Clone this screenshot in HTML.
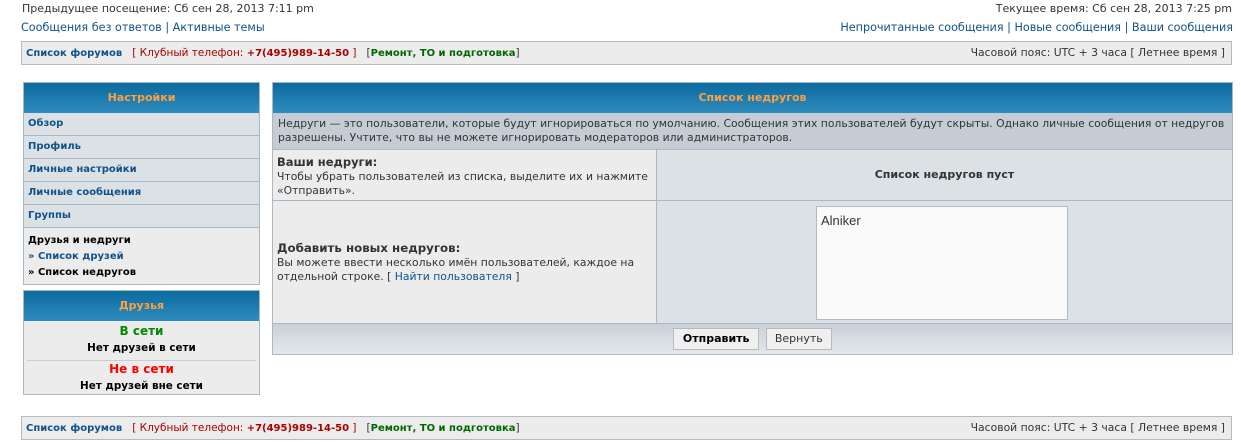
<!DOCTYPE html><html><head><meta charset="utf-8"><style>
*{margin:0;padding:0;box-sizing:border-box}
body{width:1241px;height:444px;background:#fff;font-family:"DejaVu Sans","Liberation Sans",sans-serif;font-size:10.4px;color:#333;position:relative;overflow:hidden}
.a{position:absolute;white-space:nowrap}
.blue{color:#105289}
.nav{position:absolute;left:21px;width:1211px;height:24px;background:#ececec;border:1px solid #b4bac0;font-size:10.5px;line-height:22px}
.nav b{font-weight:bold;font-size:10px}
.hdr{background:linear-gradient(#0a6a9e,#2f8cbe);color:#ff9f40;font-weight:bold;text-align:center;font-size:11px}
.box{position:absolute;border:1px solid #a9b8c2;background:#ececec}
.item{height:23px;border-bottom:1px solid #a9b8c2;background:#dce1e5;color:#105289;font-weight:bold;font-size:10px;line-height:22px;padding-left:4px}
</style></head><body>
<div class="a" style="left:22px;top:2px;font-size:11px">Предыдущее посещение: Сб сен 28, 2013 7:11 pm</div>
<div class="a" style="right:9px;top:2px;font-size:11px">Текущее время: Сб сен 28, 2013 7:25 pm</div>
<div class="a blue" style="left:21px;top:21px;font-size:11.2px">Сообщения без ответов | Активные темы</div>
<div class="a blue" style="right:8px;top:21px;font-size:11.2px">Непрочитанные сообщения | Новые сообщения | Ваши сообщения</div>

<div class="nav" style="top:41px"><span style="margin-left:4px;color:#105289;font-weight:bold;font-size:10px">Список форумов</span> &nbsp; <span style="color:#a00">[ Клубный телефон: <b>+7(495)989-14-50</b> ]</span> &nbsp; <span style="color:#333">[</span><b style="color:#060">Ремонт, ТО и подготовка</b><span>]</span><span style="position:absolute;right:6px;font-size:10.8px">Часовой пояс: UTC + 3 часа [ Летнее время ]</span></div>

<div class="box" style="left:23px;top:82px;width:237px;height:203px">
<div class="hdr" style="height:30px;line-height:29px">Настройки</div>
<div class="item">Обзор</div><div class="item">Профиль</div><div class="item">Личные настройки</div><div class="item">Личные сообщения</div><div class="item">Группы</div>
<div style="padding:5px 4px;font-weight:bold;font-size:10px;line-height:16px;color:#000">Друзья и недруги<br><span style="color:#105289">» Список друзей</span><br>» Список недругов</div>
</div>

<div class="box" style="left:23px;top:290px;width:237px;height:105px">
<div class="hdr" style="height:30px;line-height:29px;margin-top:0">Друзья</div>
<div style="text-align:center;font-weight:bold;line-height:17px;padding-top:2px">
<div style="color:#080;font-size:12px">В сети</div><div style="color:#000">Нет друзей в сети</div>
<div style="border-top:1px solid #ccc;margin:3px 3px 0;color:#f00;font-size:12px">Не в сети</div><div style="color:#000">Нет друзей вне сети</div></div>
</div>

<div class="box" style="left:272px;top:82px;width:961px;height:273px;background:#dce1e5">
<div class="hdr" style="height:30px;line-height:29px">Список недругов</div>
<div style="height:37px;background:#c5ccd3;border-bottom:1px solid #a9b8c2;padding:4px 5px;line-height:14px;font-size:10.8px">Недруги — это пользователи, которые будут игнорироваться по умолчанию. Сообщения этих пользователей будут скрыты. Однако личные сообщения от недругов разрешены. Учтите, что вы не можете игнорировать модераторов или администраторов.</div>
<div style="display:flex;height:51px;border-bottom:1px solid #a9b8c2">
<div style="width:384px;background:#ececec;border-right:1px solid #a9b8c2;padding:5px 4px;line-height:14px;font-size:10.8px"><b style="font-size:11.5px">Ваши недруги:</b><br>Чтобы убрать пользователей из списка, выделите их и нажмите «Отправить».</div>
<div style="flex:1;text-align:center;font-weight:bold;font-size:11px;line-height:50px">Список недругов пуст</div></div>
<div style="display:flex;height:123px;border-bottom:1px solid #a9b8c2">
<div style="width:384px;background:#ececec;border-right:1px solid #a9b8c2;padding:40px 4px 0;line-height:14px;font-size:10.8px"><b style="font-size:11.8px">Добавить новых недругов:</b><br>Вы можете ввести несколько имён пользователей, каждое на отдельной строке. [ <span class="blue">Найти пользователя</span> ]</div>
<div style="flex:1;position:relative"><div style="position:absolute;left:159px;top:5px;width:252px;height:114px;background:#fafafa;border:1px solid #b4bac0;padding:6px 4px;font-family:'Liberation Sans',sans-serif;font-size:13px;color:#333">Alniker</div></div></div>
<div style="height:30px;background:linear-gradient(#c8d0d7,#e4e8ec);text-align:center;padding-top:4px">
<span style="display:inline-block;width:86px;height:22px;border:1px solid #b4bac0;background:#efefef;font-weight:bold;font-size:11px;line-height:20px;color:#000">Отправить</span>&nbsp;&nbsp;<span style="display:inline-block;width:66px;height:22px;border:1px solid #b4bac0;background:#efefef;font-size:11px;line-height:20px">Вернуть</span></div>
</div>

<div class="nav" style="top:416px"><span style="margin-left:4px;color:#105289;font-weight:bold;font-size:10px">Список форумов</span> &nbsp; <span style="color:#a00">[ Клубный телефон: <b>+7(495)989-14-50</b> ]</span> &nbsp; <span style="color:#333">[</span><b style="color:#060">Ремонт, ТО и подготовка</b><span>]</span><span style="position:absolute;right:6px;font-size:10.8px">Часовой пояс: UTC + 3 часа [ Летнее время ]</span></div>
</body></html>
